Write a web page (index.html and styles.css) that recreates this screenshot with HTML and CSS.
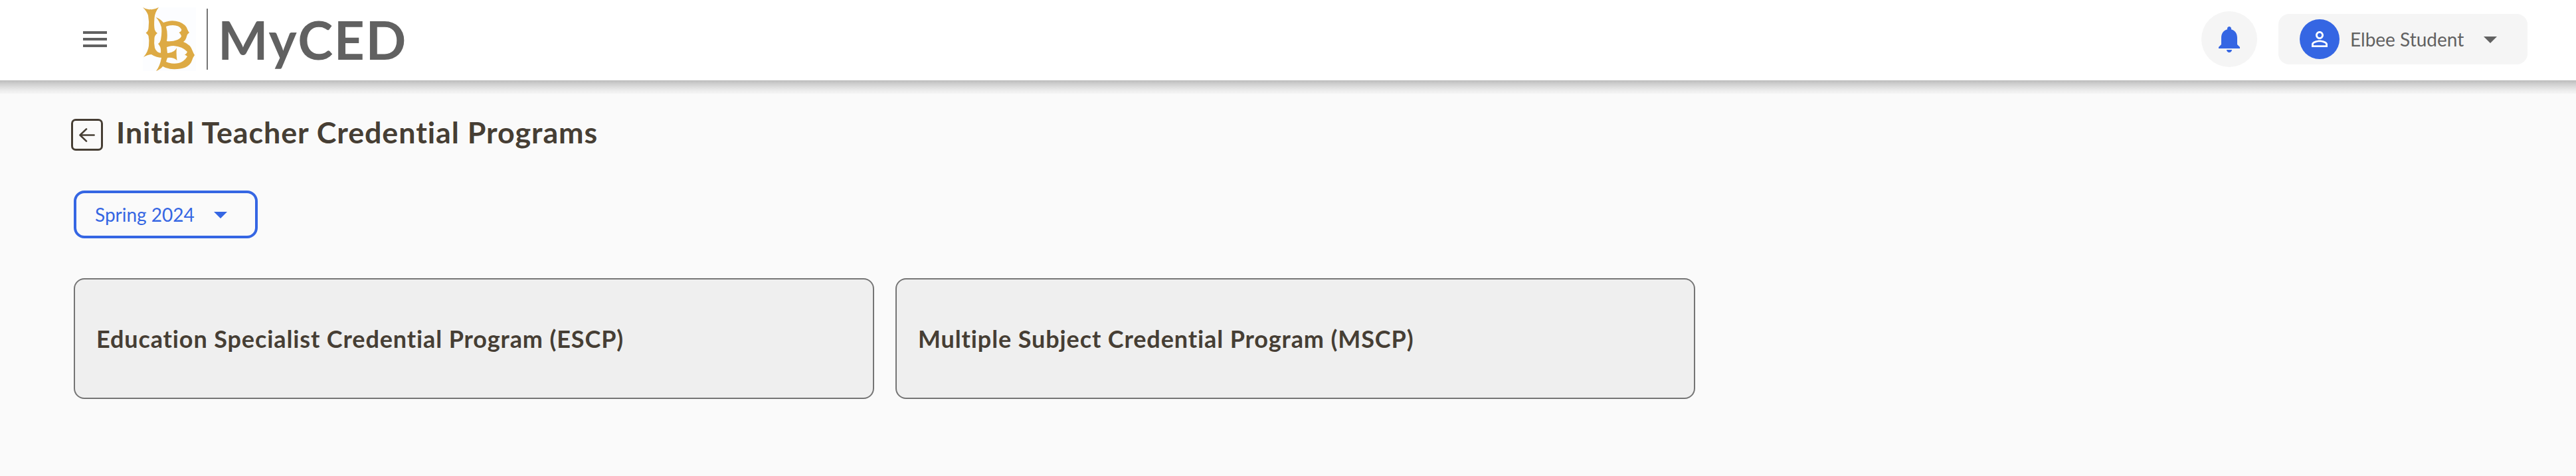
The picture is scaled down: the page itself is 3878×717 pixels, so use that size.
FILE: index.html
```html
<!DOCTYPE html>
<html lang="en">
<head>
<meta charset="utf-8">
<title>MyCED</title>
<link rel="stylesheet" href="styles.css">
</head>
<body>
<header class="topbar">
  <button class="menu-button" aria-label="Menu">
    <svg class="icon" viewBox="0 0 24 24"><path d="M3 18h18v-2H3v2zm0-5h18v-2H3v2zm0-7v2h18V6H3z"/></svg>
  </button>
  <svg class="logo" viewBox="0 0 80 96" aria-label="Long Beach emblem">
    <g fill="#ddaa44" fill-rule="evenodd">
      <path d="M0 0Q6 4 11.500 3Q17 4 24 0Q18 8 17.500 16Q16.500 28 18 34Q19 37 22 39Q18 42 17.500 46Q16.500 54 18 61Q20 68 28 69L31 76Q20 76 13 71Q8 71 1 75Q8 67 9 58Q10 50 8.500 43Q7.500 41 4.500 38.500Q8 36 8.500 32Q10 22 8 12Q6 6 0 0Z"/>
      <path d="M19.500 15Q26 17 31 23Q43 18 55 22Q65 26 67 33Q68 36 70 38Q67 40 66 44Q65 49 61 52Q72 56 75 66Q76 69 78 72Q75 76 74 80Q70 92 52 93Q38 94 30 89Q27 93 20 96Q26 88 28 76L27 68Q28 60 23 55Q26 53 27 49Q29 39 28 30Q25 20 19.500 15ZM35 29Q38 40 36 51Q44 52 52 49Q58 46 58 43Q57 40 54.500 38Q59 36 58 33Q55 27 45 27Q39 27 35 29ZM36 60L37 69Q48 68 51 61Q50 69 51.500 80Q46 75 37 76L35 82Q44 86 54 84Q62 82 67 74Q65 72 63 71.500Q66 70 67 67Q60 59 46 58Q41 58 36 60Z"/>
    </g>
  </svg>
  <div class="divider"></div>
  <div class="brand">MyCED</div>
  <div class="actions">
    <button class="bell" aria-label="Notifications">
      <svg class="icon" viewBox="0 0 24 24"><path d="M12 22c1.100 0 2-.9 2-2h-4c0 1.100.89 2 2 2zm6-6v-5c0-3.070-1.640-5.640-4.500-6.320V4c0-.83-.67-1.500-1.500-1.500s-1.500.67-1.500 1.500v.68C7.630 5.360 6 7.920 6 11v5l-2 2v1h16v-1l-2-2z"/></svg>
    </button>
    <button class="account">
      <span class="avatar">
        <svg class="avatar-icon" viewBox="0 0 24 24"><path d="M12 5.900c1.160 0 2.100.94 2.100 2.100s-.94 2.100-2.100 2.100S9.900 9.160 9.900 8s.94-2.100 2.100-2.100m0 9c2.970 0 6.100 1.460 6.100 2.100v1.100H5.900V17c0-.64 3.130-2.100 6.100-2.100M12 4C9.790 4 8 5.790 8 8s1.790 4 4 4 4-1.790 4-4-1.790-4-4-4zm0 9c-2.670 0-8 1.340-8 4v3h16v-3c0-2.660-5.330-4-8-4z"/></svg>
      </span>
      <span class="account-name">Elbee Student</span>
      <svg class="icon" viewBox="0 0 24 24"><path d="M7 10l5 5 5-5z"/></svg>
    </button>
  </div>
</header>
<main class="page">
  <div class="heading">
    <button class="back" aria-label="Back">
      <svg class="back-icon" viewBox="0 0 24 21" fill="none" stroke="currentColor" stroke-width="2.600" stroke-linecap="round" stroke-linejoin="round"><path d="M22.600 10.500H1.500M11 1.400L1.500 10.500L11 19.600"/></svg>
    </button>
    <h1 class="title">Initial Teacher Credential Programs</h1>
  </div>
  <button class="term">
    <span class="term-label">Spring 2024</span>
    <svg class="icon" viewBox="0 0 24 24"><path d="M7 10l5 5 5-5z"/></svg>
  </button>
  <div class="cards">
    <button class="card">Education Specialist Credential Program (ESCP)</button>
    <button class="card">Multiple Subject Credential Program (MSCP)</button>
  </div>
</main>
</body>
</html>
```
FILE: styles.css
```css
* { box-sizing: border-box; }

body {
  margin: 0;
  min-height: 717px;
  background: #fafafa;
  font-family: Lato, sans-serif;
  color: #463e34;
}

button {
  margin: 0;
  padding: 0;
  border: 0;
  background: none;
  font: inherit;
  color: inherit;
}

.icon {
  display: block;
  flex: none;
  width: 48px;
  height: 48px;
  fill: currentColor;
}

.topbar {
  position: relative;
  display: flex;
  align-items: center;
  height: 121px;
  padding: 0 73px 3px 119px;
  background: #fff;
  color: #616161;
}

/* soft shadow cast on the page below the bar */
.topbar::after {
  content: "";
  position: absolute;
  top: 100%;
  left: 0;
  right: 0;
  height: 20px;
  background: linear-gradient(#bcbcbc, #cecece 25%, #e0e0e0 55%, #eeeeee 80%, #f4f4f4);
}

.logo {
  flex: none;
  width: 80px;
  height: 96px;
  margin-left: 48px;
  background: #fcfdff;
}

.divider {
  width: 2px;
  height: 92px;
  margin-left: 16px;
  background: #757575;
}

.brand {
  margin-left: 15px;
  font-size: 80px;
  font-weight: 700;
  line-height: 96px;
  letter-spacing: .021em;
}

.actions {
  display: flex;
  align-items: center;
  gap: 32px;
  margin-left: auto;
}

.bell {
  display: flex;
  align-items: center;
  justify-content: center;
  width: 84px;
  height: 84px;
  border-radius: 50%;
  background: #f5f5f5;
  color: #3566e3;
}

.account {
  display: flex;
  align-items: center;
  width: 375px;
  height: 76px;
  padding: 0 32px;
  border-radius: 16px;
  background: #f5f5f5;
}

.avatar {
  display: flex;
  align-items: center;
  justify-content: center;
  width: 60px;
  height: 60px;
  border-radius: 50%;
  background: #3566e3;
}

.avatar-icon {
  width: 36px;
  height: 36px;
  fill: #fff;
}

.account-name {
  margin: 0 auto 0 16px;
  font-size: 28px;
  line-height: 34px;
}

.page { padding: 58px 107px 0; }

.heading {
  display: flex;
  align-items: center;
  height: 48px;
}

.back {
  display: flex;
  align-items: center;
  justify-content: center;
  width: 48px;
  height: 48px;
  border: 3px solid #463e34;
  border-radius: 7px;
}

.back-icon {
  width: 24px;
  height: 21px;
}

.title {
  margin: 0 0 8px 20px;
  font-size: 44.8px;
  font-weight: 700;
  line-height: 54px;
  letter-spacing: .021em;
}

.term {
  display: flex;
  align-items: center;
  justify-content: space-between;
  width: 277px;
  height: 72px;
  margin: 60px 0 0 4px;
  padding: 0 28px;
  border: 4px solid #3566e3;
  border-radius: 16px;
  color: #3566e3;
}

.term-label {
  font-size: 28px;
  line-height: 34px;
}

.cards {
  display: grid;
  grid-template-columns: 1205px 1204px;
  gap: 32px;
  margin: 60px 0 0 4px;
}

.card {
  height: 182px;
  padding: 0 32px;
  border: 2px solid #757575;
  border-radius: 16px;
  background: #efefef;
  font-size: 36px;
  font-weight: 700;
  letter-spacing: .0245em;
  text-align: left;
}
```
